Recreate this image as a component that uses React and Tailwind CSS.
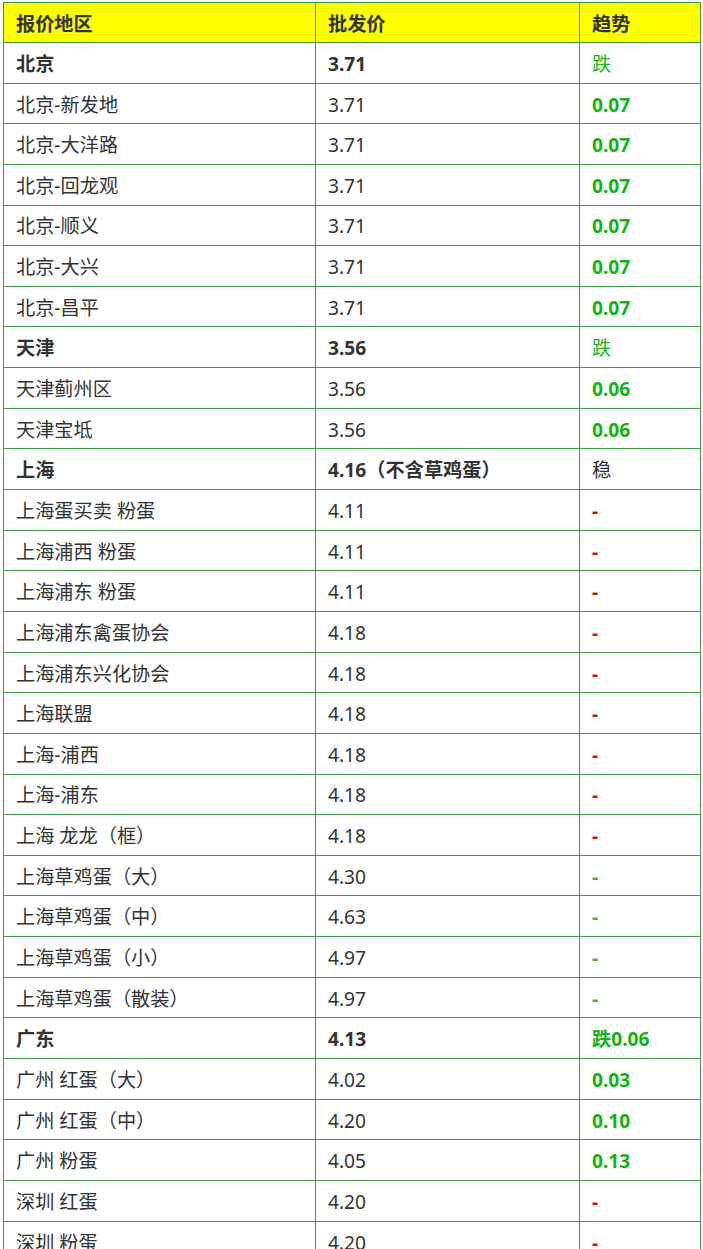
import React from "react";

const GREEN = "text-[#11b511] font-bold";
const RED = "text-[#cc1111] font-bold";
const DASH_GREEN = "text-[#44b044] font-bold";

const rows = [
  { area: "北京", price: "3.71", trend: "跌", tone: "text-[#11b511]", head: true },
  { area: "北京-新发地", price: "3.71", trend: "0.07", tone: GREEN },
  { area: "北京-大洋路", price: "3.71", trend: "0.07", tone: GREEN },
  { area: "北京-回龙观", price: "3.71", trend: "0.07", tone: GREEN },
  { area: "北京-顺义", price: "3.71", trend: "0.07", tone: GREEN },
  { area: "北京-大兴", price: "3.71", trend: "0.07", tone: GREEN },
  { area: "北京-昌平", price: "3.71", trend: "0.07", tone: GREEN },
  { area: "天津", price: "3.56", trend: "跌", tone: "text-[#11b511]", head: true },
  { area: "天津蓟州区", price: "3.56", trend: "0.06", tone: GREEN },
  { area: "天津宝坻", price: "3.56", trend: "0.06", tone: GREEN },
  { area: "上海", price: "4.16（不含草鸡蛋）", trend: "稳", tone: "text-[#333]", head: true },
  { area: "上海蛋买卖 粉蛋", price: "4.11", trend: "-", tone: RED },
  { area: "上海浦西 粉蛋", price: "4.11", trend: "-", tone: RED },
  { area: "上海浦东 粉蛋", price: "4.11", trend: "-", tone: RED },
  { area: "上海浦东禽蛋协会", price: "4.18", trend: "-", tone: RED },
  { area: "上海浦东兴化协会", price: "4.18", trend: "-", tone: RED },
  { area: "上海联盟", price: "4.18", trend: "-", tone: RED },
  { area: "上海-浦西", price: "4.18", trend: "-", tone: RED },
  { area: "上海-浦东", price: "4.18", trend: "-", tone: RED },
  { area: "上海 龙龙（框）", price: "4.18", trend: "-", tone: RED },
  { area: "上海草鸡蛋（大）", price: "4.30", trend: "-", tone: DASH_GREEN },
  { area: "上海草鸡蛋（中）", price: "4.63", trend: "-", tone: DASH_GREEN },
  { area: "上海草鸡蛋（小）", price: "4.97", trend: "-", tone: DASH_GREEN },
  { area: "上海草鸡蛋（散装）", price: "4.97", trend: "-", tone: DASH_GREEN },
  { area: "广东", price: "4.13", trend: "跌0.06", tone: GREEN, head: true },
  { area: "广州 红蛋（大）", price: "4.02", trend: "0.03", tone: GREEN },
  { area: "广州 红蛋（中）", price: "4.20", trend: "0.10", tone: GREEN },
  { area: "广州 粉蛋", price: "4.05", trend: "0.13", tone: GREEN },
  { area: "深圳 红蛋", price: "4.20", trend: "-", tone: RED },
  { area: "深圳 粉蛋", price: "4.20", trend: "-", tone: RED },
];

const cell = "border border-[#3f9a46] pl-3 pt-[3px] align-middle";

export default function App() {
  return (
    <div
      className="bg-white pt-[2px] pl-[3px] min-h-screen"
      style={{ fontFamily: '"Noto Sans", "Noto Sans CJK SC", sans-serif' }}
    >
      <table className="border-collapse w-[698px] table-fixed text-[19.2px] text-[#333]">
        <colgroup>
          <col className="w-[312px]" />
          <col className="w-[264px]" />
          <col />
        </colgroup>
        <thead>
          <tr className="bg-[#ffff00] h-[40px]">
            <th className={`${cell} text-left font-bold`}>报价地区</th>
            <th className={`${cell} text-left font-bold`}>批发价</th>
            <th className={`${cell} text-left font-bold`}>趋势</th>
          </tr>
        </thead>
        <tbody>
          {rows.map((r, i) => (
            <tr key={i} className="h-[40.65px]">
              <td className={`${cell} ${r.head ? "font-bold" : ""}`}>{r.area}</td>
              <td className={`${cell} ${r.head ? "font-bold" : ""}`}>{r.price}</td>
              <td className={`${cell} ${r.tone}`}>{r.trend}</td>
            </tr>
          ))}
        </tbody>
      </table>
    </div>
  );
}
